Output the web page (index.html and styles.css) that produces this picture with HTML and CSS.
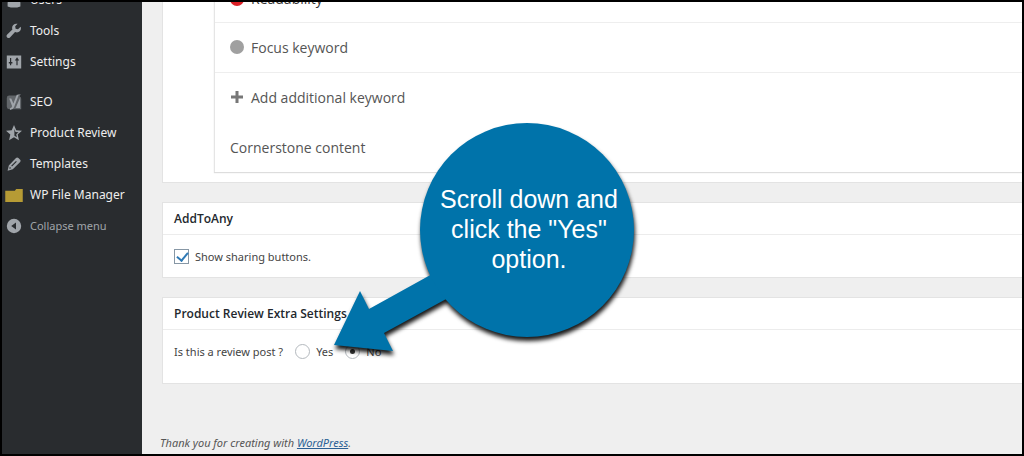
FILE: index.html
```
<!DOCTYPE html>
<html lang="en">
<head>
  <meta charset="UTF-8" />
  <meta name="viewport" content="width=device-width, initial-scale=1.0" />
  <title>Edit Post</title>
  <link rel="stylesheet" href="styles.css">
</head>
<body>

  <!-- Admin menu -->
  <nav class="sidebar">
    <a href="#" class="menu-item">
      <svg class="icon" viewBox="0 0 20 20"><circle cx="10" cy="5" r="4"/><path d="M2 18v-4q0-4 4-4h8q4 0 4 4v4q-8 3-16 0z"/></svg>
      Users
    </a>
    <a href="#" class="menu-item">
      <svg class="icon" viewBox="0 0 20 20"><path d="M17.500 10a5.500 5.500 0 0 1-6.200 1.300L5 18a2.400 2.400 0 0 1-3.500-3.500L8 8.200A5.500 5.500 0 0 1 14.500 1l-3 3.200.5 3 3 .5 3.300-3a5.500 5.500 0 0 1-.8 5.300z"/></svg>
      Tools
    </a>
    <a href="#" class="menu-item">
      <svg class="icon" viewBox="0 0 20 20"><path fill-rule="evenodd" d="M1 2h18v16H1zM5 5v5H3.500v2H5v2h1.500v-2H8v-2H6.500V5zM13 6v2h-2l2.800-4 2.700 4h-2v6H13z"/></svg>
      Settings
    </a>

    <a href="#" class="menu-item menu-group">
      <svg class="icon" viewBox="0 0 20 20"><path class="icon-dim" d="M4 2h10l2-2h2.500L17 3q2 .5 2 3v13H4q-3 0-3-3V5q0-3 3-3z"/><path d="M4 5.500h2.600l2.600 6.500L13.500 1H16l-6 15.500Q8.500 20 5 20v-2.200q2-.3 2.700-2.500zM17.500 5v12.500H12z"/></svg>
      SEO
    </a>
    <a href="#" class="menu-item">
      <svg class="icon" viewBox="0 0 20 20"><path fill-rule="evenodd" d="M10 0l2.800 6.600 7.200.6-5.400 4.700 1.600 7.100L10 15.300 3.800 19l1.600-7.100L0 7.200l7.200-.6zM10.500 5v8.500l3.100 1.900-.8-3.700 2.800-2.500-3.700-.4z"/></svg>
      Product Review
    </a>
    <a href="#" class="menu-item">
      <svg class="icon" viewBox="0 0 20 20"><path fill-rule="evenodd" d="M12.500 2.500q1.500-1.500 3 0l2.200 2.200q1.300 1.400 0 2.800L8.500 16.500 2 18.500 3.500 12zM12.500 6.200l-6 6 1 1 6-6zM4.800 13.500l-.7 2.400 2.400-.7z"/></svg>
      Templates
    </a>
    <a href="#" class="menu-item">
      <svg class="icon folder" viewBox="0 0 20 16"><path d="M0 3h11l1.500-2H20v15H0z"/></svg>
      WP File Manager
    </a>
    <button type="button" class="menu-item collapse">
      <svg class="icon" viewBox="0 0 20 20"><path fill-rule="evenodd" d="M10 1a9 9 0 1 1 0 18 9 9 0 0 1 0-18zM12.500 5.500L6.500 10l6 4.500z"/></svg>
      Collapse menu
    </button>
  </nav>

  <main class="content">

    <!-- SEO box -->
    <section class="panel seo-panel">
      <div class="seo-box">
        <button type="button" class="seo-row readability">
          <svg class="seo-icon bad" viewBox="0 0 14 14"><circle cx="7" cy="7" r="7"/></svg>
          Readability
        </button>
        <button type="button" class="seo-row">
          <svg class="seo-icon" viewBox="0 0 14 14"><circle cx="7" cy="6" r="7"/></svg>
          Focus keyword
        </button>
        <button type="button" class="seo-row">
          <svg class="seo-icon plus" viewBox="0 0 14 14"><path d="M5.500 0h3v4.500H13v3H8.500V12h-3V7.500H1v-3h4.500z"/></svg>
          Add additional keyword
        </button>
        <button type="button" class="seo-row cornerstone">Cornerstone content</button>
      </div>
    </section>

    <section class="panel">
      <h2>AddToAny</h2>
      <div class="panel-body">
        <input type="checkbox" id="sharing" checked>
        <label for="sharing">Show sharing buttons.</label>
      </div>
    </section>

    <section class="panel">
      <h2>Product Review Extra Settings</h2>
      <div class="panel-body review-body" role="radiogroup" aria-labelledby="review-label">
        <span id="review-label" class="question">Is this a review post ?</span>
        <input type="radio" name="review" id="review-yes">
        <label for="review-yes">Yes</label>
        <input type="radio" name="review" id="review-no" class="option-no" checked>
        <label for="review-no">No</label>
      </div>
    </section>

    <footer>Thank you for creating with <a href="https://wordpress.org/">WordPress</a>.</footer>
  </main>

  <!-- Callout bubble with its arrow -->
  <div class="callout">
    <svg class="callout-shape" viewBox="0 0 302 230">
      <path d="M0 223L26 169 35 187 100 151 114 176 50 211 59 229z"/>
      <circle cx="193" cy="108" r="107"/>
    </svg>
    <p>Scroll down and click the "Yes" option.</p>
  </div>

</body>
</html>
```
FILE: styles.css
```
* {
  box-sizing: border-box;
  margin: 0;
  padding: 0;
}

body {
  position: relative;
  display: flex;
  height: 100vh;
  overflow: hidden;
  border: 2px solid #000;
  background: #efefef;
  color: #444;
  font-family: "Noto Sans", "Open Sans", sans-serif;
  font-size: 11px;
}

button {
  border: none;
  background: none;
  font-family: inherit;
  text-align: left;
  cursor: pointer;
}

/* the page is scrolled down, so the top rows are cut off */
.sidebar {
  flex: 0 0 140px;
  display: flex;
  flex-direction: column;
  padding-left: 4px;
  background: #292c2f;
}

.sidebar .menu-item:first-child {
  margin-top: -18px;
}

.menu-item {
  flex: none;
  display: flex;
  align-items: center;
  gap: 8px;
  height: 31px;
  color: #eee;
  font-size: 12px;
  text-decoration: none;
  white-space: nowrap;
}

.menu-group {
  margin-top: 9px;
}

.icon {
  width: 16px;
  height: 16px;
  fill: #a0a5aa;
}

.icon-dim {
  fill: #62666a;
}

.folder {
  width: 18px;
  height: 14px;
  margin: 0 -1px;
  fill: #b69b35;
}

.collapse {
  color: #a0a5aa;
  font-size: 11px;
}

.content {
  flex: 1;
  min-width: 0;
  padding-left: 20px;
}

.panel {
  margin-bottom: 19px;
  border: 1px solid #e3e3e3;
  border-right: none;
  background: #fff;
}

.panel h2 {
  height: 32px;
  padding-left: 11px;
  border-bottom: 1px solid #ececec;
  color: #23282d;
  font-family: "Open Sans", sans-serif;
  font-size: 12px;
  font-weight: 600;
  line-height: 32px;
}

.panel-body {
  display: flex;
  align-items: center;
  height: 42px;
  padding-left: 11px;
}

.review-body {
  height: 53px;
  padding-bottom: 11px;
}

.seo-panel {
  margin-top: -31px;
  padding: 0 0 10px 51px;
}

.seo-box {
  border-left: 1px solid #e5e5e5;
  box-shadow: 0 1px 1px #ddd;
}

.seo-row {
  display: flex;
  align-items: center;
  gap: 7px;
  width: 100%;
  height: 50px;
  padding-left: 15px;
  border-top: 1px solid #eee;
  color: #555;
  font-family: "Open Sans", sans-serif;
  font-size: 14px;
}

.readability {
  padding-top: 2px;
  color: #333;
}

.cornerstone {
  border-top-color: transparent;
}

.seo-icon {
  width: 14px;
  height: 14px;
  fill: #a0a0a0;
  overflow: visible;
}

.bad {
  fill: #dc1f26;
}

.plus {
  fill: #777;
}

input {
  appearance: none;
  flex: none;
  width: 15px;
  height: 15px;
  margin-right: 6px;
  border: 1px solid #b4b9be;
  background: #fff;
}

input[type="checkbox"] {
  border-color: #8797a5;
}

input[type="checkbox"]:checked::before {
  content: "";
  display: block;
  width: 5px;
  height: 9px;
  margin: 0 0 0 4px;
  border: solid #2e79b5;
  border-width: 0 2px 2px 0;
  transform: rotate(40deg);
}

input[type="radio"] {
  border-radius: 50%;
}

input[type="radio"]:checked::before {
  content: "";
  display: block;
  width: 5px;
  height: 5px;
  margin: 4px;
  border-radius: 50%;
  background: #333;
}

.question {
  margin-right: 12px;
}

.option-no {
  margin-left: 12px;
}

footer {
  padding-top: 32px;
  margin-left: -2px;
  color: #555;
  font-style: italic;
}

footer a {
  color: #2b5f94;
}

.callout {
  position: absolute;
  top: 120px;
  left: 332px;
  width: 302px;
}

.callout-shape {
  display: block;
  fill: #0073aa;
  overflow: visible;
  filter: drop-shadow(1px 4px 2px rgba(0, 0, 0, 0.9));
}

.callout p {
  position: absolute;
  top: 62px;
  right: 12px;
  width: 190px;
  color: #fff;
  font-family: "Liberation Sans", Arial, sans-serif;
  font-size: 25px;
  line-height: 30px;
  text-align: center;
}
```
